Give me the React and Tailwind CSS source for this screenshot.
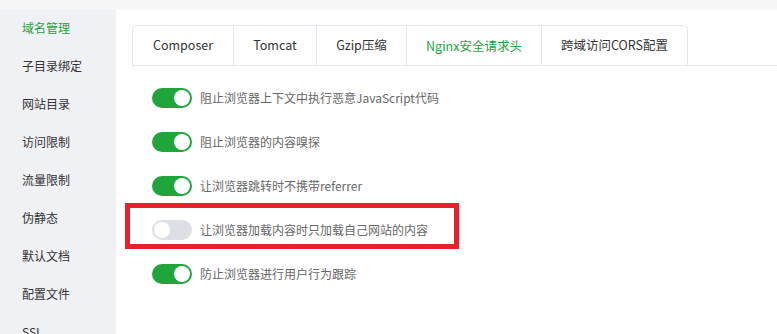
import { useState } from "react";

const menu = ["域名管理", "子目录绑定", "网站目录", "访问限制", "流量限制", "伪静态", "默认文档", "配置文件", "SSL"];
const tabs = [
  { label: "Composer", w: "w-[100px]" },
  { label: "Tomcat", w: "w-[83px]" },
  { label: "Gzip压缩", w: "w-[90px]" },
  { label: "Nginx安全请求头", w: "w-[135px]" },
  { label: "跨域访问CORS配置", w: "w-[146px]" },
];

function Toggle({ on, onClick }) {
  return (
    <button
      onClick={onClick}
      className={`relative h-5 w-10 shrink-0 rounded-full transition-colors ${on ? "bg-[#20a53a]" : "bg-[#dcdfe6]"}`}
    >
      <span
        className={`absolute top-[2px] h-4 w-4 rounded-full bg-white transition-all ${on ? "left-[22px]" : "left-[2px]"}`}
      />
    </button>
  );
}

export default function App() {
  const [active, setActive] = useState(3);
  const [opts, setOpts] = useState([
    { label: "阻止浏览器上下文中执行恶意JavaScript代码", on: true },
    { label: "阻止浏览器的内容嗅探", on: true },
    { label: "让浏览器跳转时不携带referrer", on: true },
    { label: "让浏览器加载内容时只加载自己网站的内容", on: false, marked: true },
    { label: "防止浏览器进行用户行为跟踪", on: true },
  ]);

  const flip = (i) => setOpts(opts.map((o, j) => (j === i ? { ...o, on: !o.on } : o)));

  return (
    <div
      className="h-[334px] w-[777px] overflow-hidden bg-[#f7f7f7] pt-[10px]"
      style={{ fontFamily: '"Noto Sans CJK SC", "Noto Sans", sans-serif' }}
    >
      <div className="flex h-full">
        {/* Sidebar */}
        <div className="w-[116px] shrink-0 bg-[#f0f1f5]">
          <div className="-mt-[1px]">
            {menu.map((m, i) => (
              <div
                key={m}
                className={`flex h-[38px] items-center pl-[22px] text-[12px] ${i === 0 ? "text-[#20a53a]" : "text-[#333]"}`}
              >
                {m}
              </div>
            ))}
          </div>
        </div>

        {/* Main */}
        <div className="flex-1 bg-white pl-4 pt-[15px]">
          <div className="flex border-b border-[#e4e7ed]">
            <div className="flex overflow-hidden rounded-t-[5px] border border-b-0 border-[#e4e7ed]">
              {tabs.map((t, i) => (
                <div
                  key={t.label}
                  onClick={() => setActive(i)}
                  className={`flex h-[39px] cursor-pointer items-center justify-center text-[12.5px] ${t.w} ${i > 0 ? "border-l border-[#e4e7ed]" : ""} ${
                    i === active ? "-mb-px h-[40px] bg-white text-[#20a53a]" : "text-[#333]"
                  }`}
                >
                  {t.label}
                </div>
              ))}
            </div>
          </div>

          <div className="pt-[10px]">
            {opts.map((o, i) => (
              <div key={o.label} className="relative flex h-[44px] items-center gap-2 pl-5">
                <Toggle on={o.on} onClick={() => flip(i)} />
                <span className="text-[12px] text-[#666]">{o.label}</span>
                {o.marked && (
                  <div className="pointer-events-none absolute left-[-7px] top-[-5px] h-[46px] w-[334px] border-[5px] border-[#e8202a]" />
                )}
              </div>
            ))}
          </div>
        </div>
      </div>
    </div>
  );
}
